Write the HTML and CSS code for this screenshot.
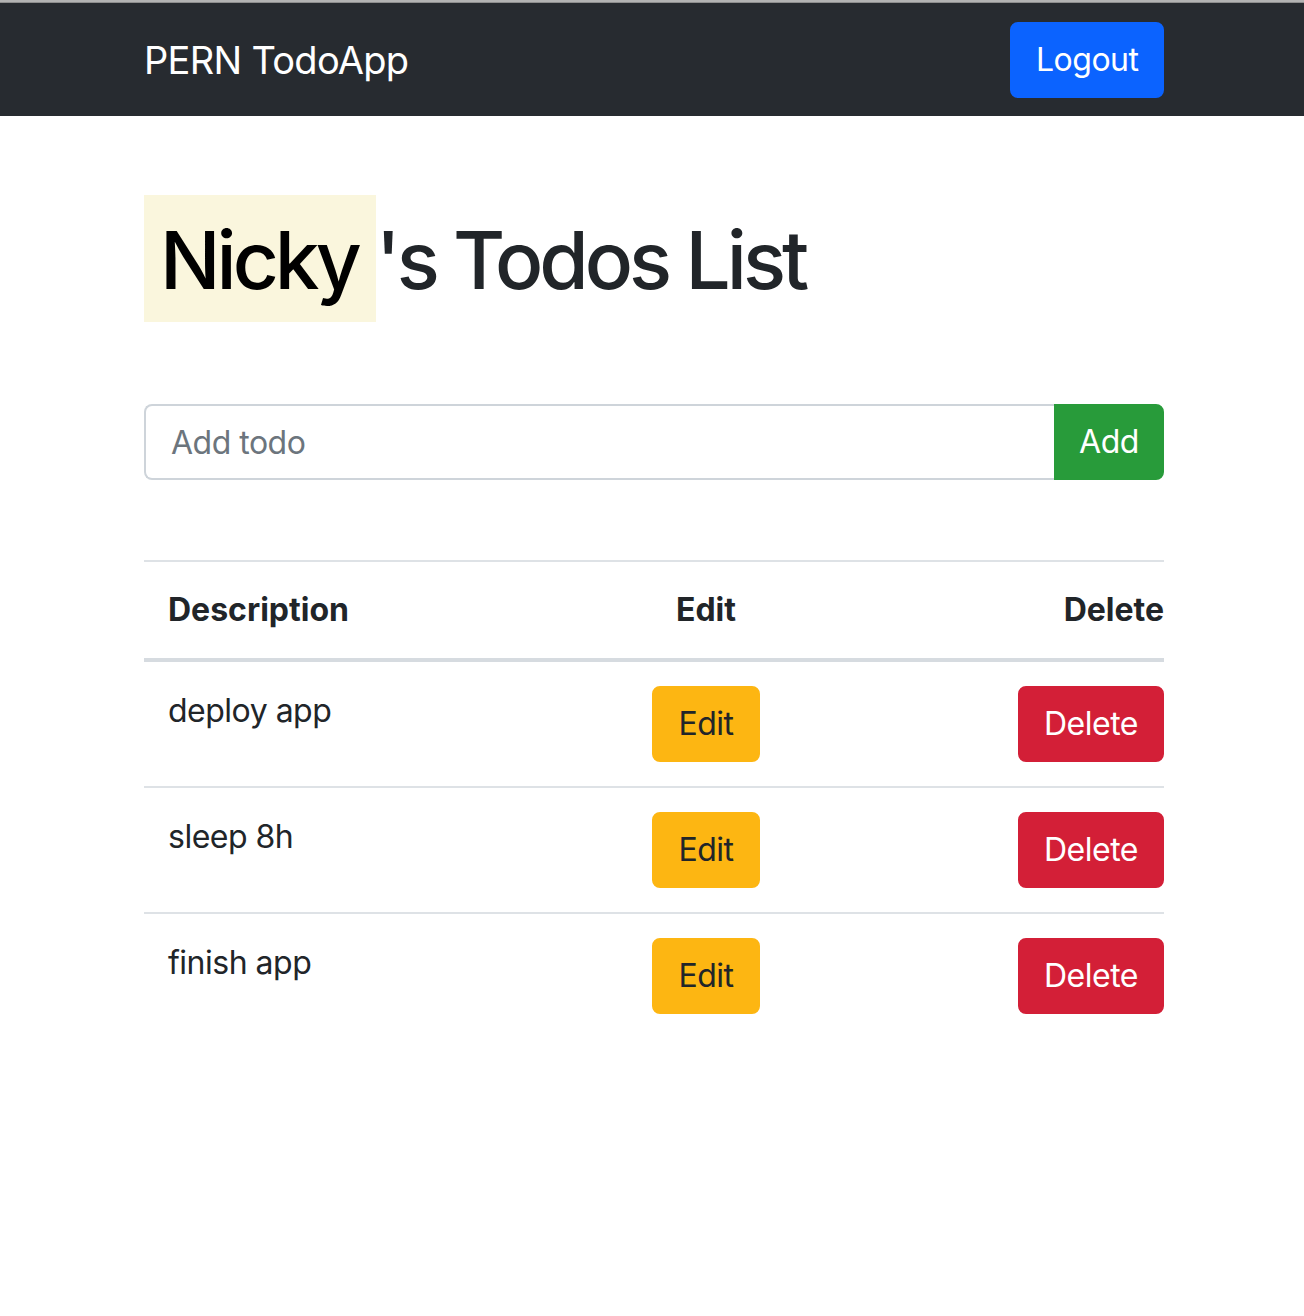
FILE: index.html
```html
<!DOCTYPE html>
<html lang="en">
<head>
<meta charset="utf-8">
<title>PERN TodoApp</title>
<link rel="stylesheet" href="styles.css">
</head>
<body>
<div class="chrome-line"></div>
<nav class="navbar">
  <div class="container nav-inner">
    <span class="brand">PERN TodoApp</span>
    <button class="btn btn-primary">Logout</button>
  </div>
</nav>
<main class="container">
  <h1 class="title"><mark class="name">Nicky</mark>'s Todos List</h1>
  <form class="add-form">
    <input class="add-input" type="text" placeholder="Add todo">
    <button class="btn btn-success add-btn" type="button">Add</button>
  </form>
  <table class="todo-table">
    <colgroup>
      <col class="col-desc">
      <col class="col-edit">
      <col class="col-del">
    </colgroup>
    <thead>
      <tr>
        <th class="c-desc">Description</th>
        <th class="c-edit">Edit</th>
        <th class="c-del">Delete</th>
      </tr>
    </thead>
    <tbody>
      <tr>
        <td class="c-desc">deploy app</td>
        <td class="c-edit"><button class="btn btn-warning">Edit</button></td>
        <td class="c-del"><button class="btn btn-danger">Delete</button></td>
      </tr>
      <tr>
        <td class="c-desc">sleep 8h</td>
        <td class="c-edit"><button class="btn btn-warning">Edit</button></td>
        <td class="c-del"><button class="btn btn-danger">Delete</button></td>
      </tr>
      <tr>
        <td class="c-desc">finish app</td>
        <td class="c-edit"><button class="btn btn-warning">Edit</button></td>
        <td class="c-del"><button class="btn btn-danger">Delete</button></td>
      </tr>
    </tbody>
  </table>
</main>
</body>
</html>
```

FILE: styles.css
```css
* { box-sizing: border-box; }
html, body {
  margin: 0;
  padding: 0;
  background: #fff;
}
body {
  font-family: Inter, "Liberation Sans", Arial, sans-serif;
  font-size: 32px;
  line-height: 1.5;
  color: #212529;
  letter-spacing: -0.5px;
}
.chrome-line {
  height: 3px;
  background: #b3b3b3;
  border-bottom: 1px solid #8e8e8e;
}
.container {
  width: 1020px;
  margin: 0 0 0 144px;
}
.navbar {
  background: #272b30;
  height: 113px;
  display: flex;
  align-items: center;
}
.nav-inner {
  display: flex;
  align-items: center;
  justify-content: space-between;
  padding-top: 1px;
}
.brand {
  color: #fff;
  font-size: 38px;
  line-height: 1.5;
  letter-spacing: -0.7px;
  margin-top: 1px;
}
.btn {
  font-family: inherit;
  font-size: 32px;
  line-height: 48px;
  padding: 12px 24px;
  border: 2px solid transparent;
  border-radius: 8px;
  cursor: pointer;
  display: inline-block;
  letter-spacing: -0.5px;
}
.btn-primary {
  background: #0b63ff;
  border-color: #0b63ff;
  color: #fff;
  width: 154px;
}
.btn-success {
  background: #289b3a;
  border-color: #289b3a;
  color: #fff;
}
.btn-warning {
  background: #fdb612;
  border-color: #fdb612;
  color: #212529;
  width: 108px;
  padding-left: 0;
  padding-right: 0;
}
.btn-danger {
  background: #d31f37;
  border-color: #d31f37;
  color: #fff;
  width: 146px;
  padding-left: 0;
  padding-right: 0;
}
.title {
  font-size: 80px;
  font-weight: 500;
  line-height: 96px;
  margin: 96px 0 0;
  letter-spacing: -4px;
}
.name {
  background: #faf6dd;
  color: #000;
  padding: 16px 18px 14px 16px;
}
.add-form {
  display: flex;
  margin-top: 96px;
}
.add-input {
  flex: 1;
  height: 76px;
  font-family: inherit;
  font-size: 32px;
  letter-spacing: -0.5px;
  padding: 0 25px;
  border: 2px solid #ced4da;
  border-right: none;
  border-radius: 8px 0 0 8px;
  color: #495057;
  outline: none;
}
.add-input::placeholder {
  color: #6c757d;
}
.add-btn {
  width: 110px;
  height: 76px;
  border-radius: 0 8px 8px 0;
  padding: 0;
}
.todo-table {
  width: 100%;
  margin-top: 80px;
  border-collapse: collapse;
  table-layout: fixed;
}
.col-desc { width: 484px; }
.col-edit { width: 156px; }
.col-del { width: 380px; }
.todo-table th,
.todo-table td {
  padding: 24px;
  vertical-align: top;
  border-top: 2px solid #dee2e6;
}
.todo-table th {
  font-weight: 700;
  text-align: left;
  letter-spacing: 0;
}
.todo-table td.c-desc {
  padding-top: 25px;
  padding-bottom: 23px;
}
.todo-table thead th {
  border-bottom: 4px solid #d6dbe0;
}
.todo-table tbody tr:last-child td {
  border-bottom: none;
}
.todo-table tbody tr:first-child td {
  border-top: none;
}
.todo-table .c-edit { text-align: center; }
.todo-table .c-del { text-align: right; padding-right: 0; }
```
